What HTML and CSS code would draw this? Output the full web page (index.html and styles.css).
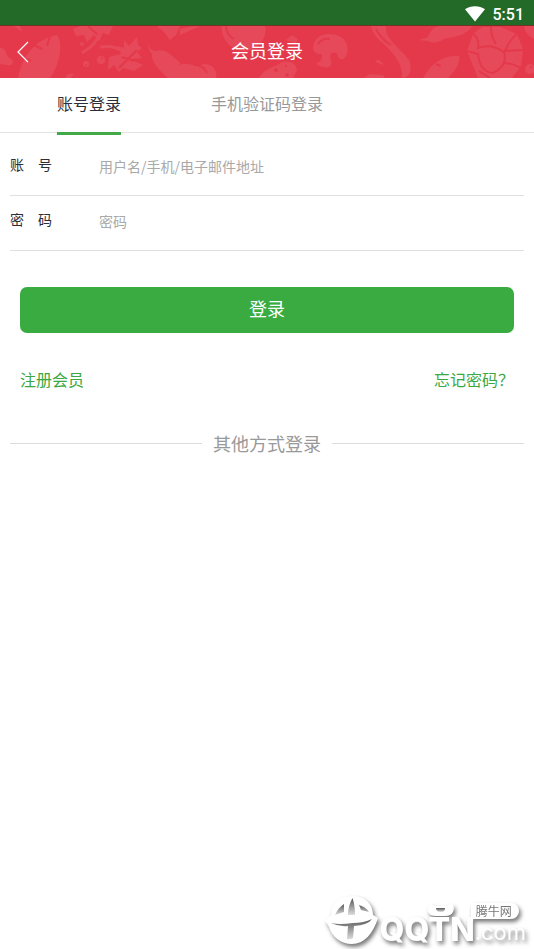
FILE: index.html
```html
<!DOCTYPE html>
<html lang="zh-CN">
<head>
<meta charset="utf-8">
<meta name="viewport" content="width=device-width, initial-scale=1">
<title>会员登录</title>
<link rel="stylesheet" href="styles.css">
</head>
<body>
<div class="status">
  <svg class="wifi" viewBox="0 0 20 16" aria-hidden="true"><path d="M0 3.2C5.5-.9 14.500-.9 20 3.200L10 15.500Z"/></svg>
  <span>5:51</span>
</div>
<header class="header">
  <svg class="pattern" viewBox="0 0 534 52" preserveAspectRatio="xMidYMid slice" aria-hidden="true">
    <g class="shape">
      <path d="M0 22C7 21 5 30 11 33C15 36 12 41 7 39L0 38Z"/>
      <path d="M14 0L22 6L20 0Z"/>
      <path d="M18 52C22 29 36 13 57 9C64 18 59 40 50 52Z"/>
      <path d="M73 3L80 0H113L109 9L103 7L99 15L94 9L87 16L84 9L76 10Z"/>
      <path d="M124 14L129 20L137 11L138 19L142 22L137 26L142 32L130 33L143 39L134 45L123 42L119 46L114 39L108 44L109 31L121 28L118 20L124 22Z"/>
      <circle cx="101" cy="34" r="4"/><circle cx="86" cy="38" r="3"/><circle cx="82" cy="18" r="2"/>
      <path d="M157 0H180L176 9L170 14L164 6Z"/>
      <path d="M148 17Q150 26 157 25C164 22 171 28 180 37V52H168C159 44 151 36 152 28Q148 24 148 17Z"/>
      <path d="M66 52Q66 47 74 48L70 52Z"/>
      <path d="M180 3Q190 0 200 0L180 9Z"/>
      <path d="M180 39C188 35 194 42 204 38C213 38 218 45 216 52H180Z"/>
      <path d="M222 0H265C268 10 259 23 247 25C233 27 220 13 222 0Z"/>
      <path d="M259 52C264 42 276 41 282 36C290 34 296 37 297 44L293 52Z"/>
      <path d="M286 14L292 9L298 13L296 18Z"/>
      <path d="M313 21C314 8 330 5 341 11C350 17 349 30 343 33Q338 34 337 27Q331 25 330 31C335 42 326 44 316 38Q323 35 322 28Q313 29 313 21Z"/>
      <path d="M371 0H386C384 12 399 21 409 34C413 43 410 52 402 52C403 40 397 31 385 19C379 14 373 9 371 0Z"/>
      <path d="M375 36Q378 31 384 39ZM364 52L370 48L383 49L385 52Z"/>
      <path d="M419 14L428 11C430 5 434 1 439 0H472C468 8 457 11 447 12C439 15 435 19 428 15Z"/>
      <path d="M423 52C431 37 443 29 459 30C461 37 454 46 448 52Z"/>
      <path d="M473 8L482 1H500L517 8L523 23L521 40L512 52H478L467 25Z"/>
      <circle cx="530" cy="43" r="5"/><path d="M524 0H534V13Q526 10 524 0Z"/>
    </g>
    <g class="vein">
      <path d="M23 32L31 35M34 19L42 23M50 10L47 20"/>
      <path d="M88 0L99 10M119 42L130 31L137 24M122 31L134 35"/>
      <path d="M193 39Q203 38 207 47M226 0Q226 9 234 13"/>
      <path d="M318 18Q322 12 330 13M376 3Q381 13 391 19M436 38L441 40"/>
      <path d="M473 8Q480 13 478 22Q491 17 504 26Q508 40 493 47Q480 46 478 28L467 25M491 1Q491 11 496 18M517 8Q510 13 505 25L523 24M504 37Q512 37 521 42M479 45L490 52"/>
    </g>
    <g class="stem">
      <path d="M99 8Q97 18 82 27M100 21Q112 19 121 24"/>
    </g>
    <g class="seed">
      <circle cx="102" cy="32" r="1"/><circle cx="86" cy="39" r="1"/><circle cx="276" cy="44" r="2"/><circle cx="286" cy="40" r="1"/><circle cx="287" cy="49" r="2"/><circle cx="531" cy="41" r="1"/>
    </g>
  </svg>
  <a class="back" href="#" aria-label="返回"><svg viewBox="0 0 12 22" aria-hidden="true"><path d="M11 1L1 11L11 21"/></svg></a>
  <h1>会员登录</h1>
</header>
<nav class="tabs">
  <a class="tab active" href="#">账号登录</a>
  <a class="tab" href="#">手机验证码登录</a>
</nav>
<main>
  <form>
    <div class="fields">
      <div class="field"><label for="account">账&emsp;号</label><input id="account" type="text" placeholder="用户名/手机/电子邮件地址"></div>
      <div class="field"><label for="password">密&emsp;码</label><input id="password" type="password" placeholder="密码"></div>
    </div>
    <div class="actions">
      <button class="submit" type="submit">登录</button>
      <div class="links"><a href="#">注册会员</a><a href="#">忘记密码？</a></div>
    </div>
  </form>
  <div class="divider"><span>其他方式登录</span></div>
</main>
<div class="watermark">
  <svg class="mark" viewBox="0 0 54 52" aria-hidden="true">
    <defs>
      <linearGradient id="fade" x1="0" y1="0" x2="0" y2="1"><stop offset="0" stop-color="#555"/><stop offset="1" stop-color="#ddd"/></linearGradient>
    </defs>
    <path class="white" d="M6 21C6 8 15 1 27 1C39 1 48 8 48 20L53 23C48 39 39 49 27 49C16 49 7 42 4 32L0 25Z"/>
    <path class="ink" d="M27.500 3Q23 11 23 20H30Q30 10 27.500 3Z"/>
    <path class="ink" d="M19 9Q13 13 10 20L19 17ZM34 10L36 15L44 17Q41 12 34 10Z"/>
    <path class="ink" d="M6 28Q14 32 23 31L22 44Q25 45 28 43L29 31Q43 30 47 24Q39 28 28 28Q14 30 6 28Z"/>
  </svg>
  <div class="brand">
    <svg class="horns" viewBox="0 0 28 14" aria-hidden="true"><path class="white" d="M4 1L9 3H19L25 1Q28 4 26 9Q24 13 18 13H9Q3 13 1 9Q0 4 4 1Z"/><path class="ink" d="M9 5H18Q18 9 14 9Q9 9 9 5Z"/></svg>
    <span>QQTN</span>
  </div>
  <div class="side"><span class="badge">腾牛网</span><span class="domain">.com</span></div>
</div>
</body>
</html>
```
FILE: styles.css
```css
* { box-sizing: border-box; }
body {
  margin: 0;
  min-height: 100vh;
  position: relative;
  background: #fff;
  color: #2b2d38;
  font-family: "Noto Sans CJK SC", sans-serif;
  font-size: 16px;
}
a { color: inherit; text-decoration: none; }
.status {
  display: flex;
  align-items: center;
  justify-content: flex-end;
  gap: 8px;
  height: 26px;
  padding: 4px 10px 0 0;
  background: #236a28;
  border-bottom: 1px solid #713427;
  color: #fff;
  font: 500 16px/24px Roboto, sans-serif;
}
.wifi { width: 20px; height: 16px; margin-bottom: 2px; fill: #fff; }
.header {
  position: relative;
  display: grid;
  grid-template-columns: 48px 1fr 48px;
  align-items: center;
  height: 52px;
  background: #e4394b;
  color: #fff;
  overflow: hidden;
}
.pattern { position: absolute; inset: 0; width: 100%; height: 100%; }
.shape { fill: #e64a5a; }
.vein { fill: none; stroke: #e4394b; stroke-width: 2; }
.stem { fill: none; stroke: #e64a5a; stroke-width: 3; }
.seed { fill: #e4394b; }
.back { position: relative; display: flex; padding-left: 17px; }
.back svg { width: 12px; height: 22px; fill: none; stroke: #fff; stroke-width: 1.2; }
.header h1 {
  position: relative;
  margin: 0;
  padding-bottom: 4px;
  text-align: center;
  font-size: 18px;
  line-height: 26px;
  font-weight: 400;
}
.tabs {
  display: grid;
  grid-template-columns: repeat(3, 1fr);
  height: 55px;
  border-bottom: 1px solid #e3e3e3;
}
.tab {
  justify-self: center;
  height: 57px;
  line-height: 50px;
  color: #999;
}
.tab.active { color: #2b2d38; border-bottom: 3px solid #43a848; }
.fields { padding: 8px 10px 0; }
.field {
  display: flex;
  align-items: center;
  height: 55px;
  padding-bottom: 4px;
  border-bottom: 1px solid #e0e0e0;
  font-size: 14px;
}
.field label { width: 89px; padding-bottom: 4px; }
.field input {
  flex: 1;
  min-width: 0;
  height: 40px;
  padding: 0;
  border: 0;
  outline: 0;
  background: none;
  color: inherit;
  font: inherit;
}
.field input::placeholder { color: #a9a9a9; opacity: 1; }
.actions { padding: 36px 20px 0; }
.submit {
  display: block;
  width: 100%;
  height: 46px;
  padding: 0 0 4px;
  border: 0;
  border-radius: 7px;
  background: #39ab41;
  color: #fff;
  font: 400 18px/26px "Noto Sans CJK SC", sans-serif;
}
.links {
  display: flex;
  justify-content: space-between;
  margin-top: 34px;
  line-height: 24px;
  color: #3ba843;
}
.divider {
  display: flex;
  align-items: center;
  gap: 11px;
  margin: 39px 10px 0;
  color: #999;
  font-size: 18px;
  line-height: 26px;
}
.divider::before, .divider::after {
  content: "";
  flex: 1;
  height: 1px;
  background: #ddd;
}
.watermark {
  position: absolute;
  right: 8px;
  bottom: 2px;
  display: flex;
  align-items: flex-end;
  color: #fff;
  filter: drop-shadow(2px 3px 2px #777);
}
.mark { width: 54px; height: 52px; }
.white { fill: #fff; }
.ink { fill: url(#fade); }
.brand {
  display: flex;
  flex-direction: column;
  align-items: center;
  padding-bottom: 4px;
  font: 800 32px/26px Inter, sans-serif;
}
.horns { width: 28px; height: 14px; margin-left: 28px; }
.side { display: flex; flex-direction: column; padding-bottom: 2px; }
.badge {
  align-self: flex-start;
  margin-left: -4px;
  padding: 0 7px 0 5px;
  border-radius: 3px 9px 9px 3px;
  background: #fff;
  color: #777;
  font-size: 12px;
  line-height: 16px;
}
.domain { font: 400 22px/26px Inter, sans-serif; }
```
